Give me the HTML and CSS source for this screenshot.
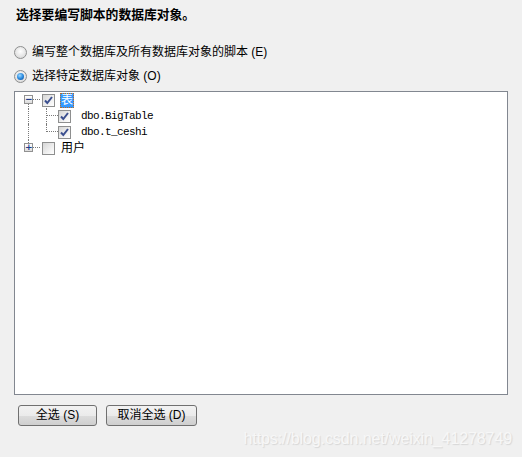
FILE: index.html
```html
<!DOCTYPE html>
<html lang="zh-CN">
<head>
<meta charset="utf-8">
<title>选择数据库对象</title>
<link rel="stylesheet" href="styles.css">
</head>
<body>
<div class="page">
  <h1 class="title">选择要编写脚本的数据库对象。</h1>

  <div class="options">
    <label class="radio-row"><span class="radio"></span><span>编写整个数据库及所有数据库对象的脚本 (E)</span></label>
    <label class="radio-row"><span class="radio checked"></span><span>选择特定数据库对象 (O)</span></label>
  </div>

  <div class="tree">
    <div class="row">
      <span class="cell first-open"><span class="exp">−</span></span>
      <span class="hline l0"></span>
      <span class="check on"><svg viewBox="0 0 11 11" width="11" height="11"><path d="M2 5.5 L4.3 8 L9 2" fill="none" stroke="#3b4f8f" stroke-width="2"/></svg></span>
      <span class="label sel">表</span>
    </div>
    <div class="row">
      <span class="cell vline"></span>
      <span class="cell elbow"></span>
      <span class="check on"><svg viewBox="0 0 11 11" width="11" height="11"><path d="M2 5.5 L4.3 8 L9 2" fill="none" stroke="#3b4f8f" stroke-width="2"/></svg></span>
      <span class="label mono">dbo.BigTable</span>
    </div>
    <div class="row">
      <span class="cell vline"></span>
      <span class="cell elbow last"></span>
      <span class="check on"><svg viewBox="0 0 11 11" width="11" height="11"><path d="M2 5.5 L4.3 8 L9 2" fill="none" stroke="#3b4f8f" stroke-width="2"/></svg></span>
      <span class="label mono">dbo.t_ceshi</span>
    </div>
    <div class="row">
      <span class="cell last-closed"><span class="exp">+</span></span>
      <span class="hline l0"></span>
      <span class="check"></span>
      <span class="label">用户</span>
    </div>
  </div>

  <div class="buttons">
    <button class="btn b1">全选 (S)</button>
    <button class="btn b2">取消全选 (D)</button>
  </div>

  <div class="watermark">https://blog.csdn.net/weixin_41278749</div>
</div>
</body>
</html>
```

FILE: styles.css
```css
html, body {
  margin: 0;
  padding: 0;
  background: #f0f0f0;
}
body {
  font-family: "Liberation Sans", "Noto Sans CJK SC", sans-serif;
  font-size: 12px;
  color: #000;
}
.page {
  position: relative;
  width: 522px;
  height: 457px;
}
.title {
  margin: 0;
  padding: 7px 0 0 16px;
  font-size: 12.8px;
  font-weight: bold;
  line-height: 16px;
  height: 16px;
}
.options {
  display: flex;
  flex-direction: column;
  padding: 17px 0 0 14px;
  height: 51px;
}
.radio-row {
  display: flex;
  align-items: center;
  height: 24px;
  gap: 5px;
  line-height: 16px;
}
.radio {
  width: 11px;
  height: 11px;
  border-radius: 50%;
  border: 1px solid #8e8f8f;
  background: radial-gradient(circle at 50% 40%, #ffffff 0%, #e4e4e4 60%, #cfcfcf 100%);
  position: relative;
  flex: none;
}
.radio.checked::after {
  content: "";
  position: absolute;
  left: 2px;
  top: 2px;
  width: 7px;
  height: 7px;
  border-radius: 50%;
  background: radial-gradient(circle at 40% 35%, #9fd8ff 0%, #2b8ce0 50%, #0b3f8a 100%);
}
.tree {
  margin-left: 14px;
  width: 494px;
  height: 304px;
  box-sizing: border-box;
  border: 1px solid #828790;
  background: #fff;
  padding: 0 0 0 4px;
}
.row {
  display: flex;
  align-items: center;
  height: 16px;
}
.cell {
  width: 18px;
  height: 16px;
  flex: none;
  position: relative;
  box-sizing: border-box;
}
.exp {
  position: absolute;
  left: 5px;
  top: 3px;
  width: 7px;
  height: 7px;
  border: 1px solid #919191;
  background: linear-gradient(#ffffff, #dcdcdc);
  font-size: 9px;
  line-height: 7px;
  text-align: center;
  color: #1d3c8a;
  font-weight: bold;
  font-family: "DejaVu Sans", sans-serif;
  z-index: 1;
}
.first-open::after {
  content: "";
  position: absolute;
  left: 9px;
  top: 11px;
  height: 6px;
  border-left: 1px dotted #7a7a7a;
}
.last-closed::before {
  content: "";
  position: absolute;
  left: 9px;
  top: 0;
  height: 3px;
  border-left: 1px dotted #7a7a7a;
}
.hline.l0 {
  width: 8px;
  height: 0;
  margin-left: -5px;
  margin-right: 2px;
  border-top: 1px dotted #7a7a7a;
  margin-top: -1px;
}
.vline::before {
  content: "";
  position: absolute;
  left: 9px;
  top: 0;
  height: 16px;
  border-left: 1px dotted #7a7a7a;
}
.elbow::before {
  content: "";
  position: absolute;
  left: 9px;
  top: 0;
  height: 16px;
  border-left: 1px dotted #7a7a7a;
}
.elbow.last::before {
  height: 8px;
}
.elbow::after {
  content: "";
  position: absolute;
  left: 10px;
  top: 7px;
  width: 11px;
  border-top: 1px dotted #7a7a7a;
}
.check {
  width: 11px;
  height: 11px;
  flex: none;
  border: 1px solid #8e8f8f;
  background: linear-gradient(135deg, #d6d6d6 0%, #f4f4f4 70%, #ffffff 100%);
  display: flex;
  align-items: center;
  justify-content: center;
}
.row .cell.elbow + .check {
  margin-left: 3px;
}
.label {
  margin-left: 6px;
  line-height: 15px;
}
.label.mono {
  margin-left: 10px;
  font-family: "Liberation Mono", monospace;
  font-size: 11px;
  letter-spacing: -0.6px;
}
.label.sel {
  background: #3399ff;
  color: #fff;
  outline: 1px dotted #c06a20;
  outline-offset: -1px;
  padding: 0 1px;
  height: 15px;
  margin-left: 5px;
}
.buttons {
  display: flex;
  gap: 9px;
  padding: 10px 0 0 18px;
}
.btn {
  height: 21px;
  border: 1px solid #707070;
  border-radius: 3px;
  background: linear-gradient(#f2f2f2 0%, #ebebeb 50%, #dddddd 51%, #cfcfcf 100%);
  font-family: "Liberation Sans", "Noto Sans CJK SC", sans-serif;
  font-size: 12px;
  line-height: 17px;
  padding: 0;
  color: #000;
}
.b1 { width: 79px; }
.b2 { width: 91px; }
.watermark {
  position: absolute;
  right: 10px;
  top: 430px;
  font-family: "Liberation Sans", sans-serif;
  font-size: 16px;
  color: #f7f7f7;
  text-shadow: 1px 1px 1px #d6d6d6;
  letter-spacing: -0.1px;
}
```
